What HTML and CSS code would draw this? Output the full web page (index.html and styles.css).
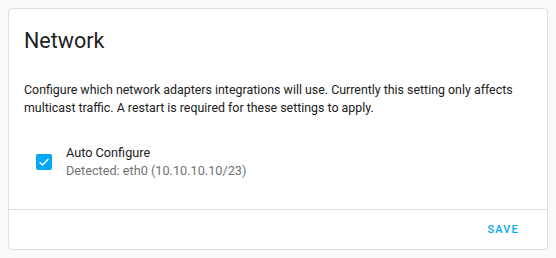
FILE: index.html
```html
<!DOCTYPE html>
<html>
<head>
<meta charset="utf-8">
<link rel="stylesheet" href="styles.css">
</head>
<body>
<div class="card">
  <h1 class="card-header">Network</h1>
  <div class="card-content">
    <p class="desc">Configure which network adapters integrations will use. Currently this setting only affects multicast traffic. A restart is required for these settings to apply.</p>
    <div class="option">
      <span class="checkbox">
        <svg viewBox="0 0 24 24" width="14" height="14"><path d="M4.5 12.5 L9.5 17 L19.5 7" fill="none" stroke="#fff" stroke-width="2.4"/></svg>
      </span>
      <div class="option-text">
        <div class="primary">Auto Configure</div>
        <div class="secondary">Detected: eth0 (10.10.10.10/23)</div>
      </div>
    </div>
  </div>
  <div class="card-actions">
    <span class="btn">SAVE</span>
  </div>
</div>
</body>
</html>
```
FILE: styles.css
```css
html, body {
  margin: 0;
  padding: 0;
  background: #fafafa;
}
body {
  padding: 8px;
  font-family: Roboto, "Liberation Sans", sans-serif;
  color: #212121;
}
.card {
  background: #fff;
  border: 1px solid #e0e0e0;
  border-radius: 4px;
  width: 538px;
  height: 240px;
  box-sizing: content-box;
  display: flex;
  flex-direction: column;
}
.card-header {
  margin: 0;
  font-weight: 400;
  font-size: 21.5px;
  line-height: 28px;
  padding: 18px 15px 0 15px;
}
.card-content {
  padding: 0 15px;
  flex: 1;
}
.desc {
  margin: 26px 0 0 0;
  font-size: 12.4px;
  line-height: 18px;
}
.option {
  display: flex;
  align-items: center;
  margin-top: 27px;
  padding-left: 12px;
}
.checkbox {
  width: 16px;
  height: 16px;
  border-radius: 2px;
  background: #03a9f4;
  display: flex;
  align-items: center;
  justify-content: center;
  margin-right: 14px;
}
.primary {
  font-size: 12.7px;
  line-height: 18px;
}
.secondary {
  font-size: 12.7px;
  line-height: 18px;
  color: #727272;
}
.card-actions {
  border-top: 1px solid #e0e0e0;
  height: 39px;
  display: flex;
  align-items: center;
  justify-content: flex-end;
  padding-right: 28px;
}
.btn {
  color: #03a9f4;
  font-size: 11px;
  font-weight: 500;
  letter-spacing: 1.2px;
}
```
